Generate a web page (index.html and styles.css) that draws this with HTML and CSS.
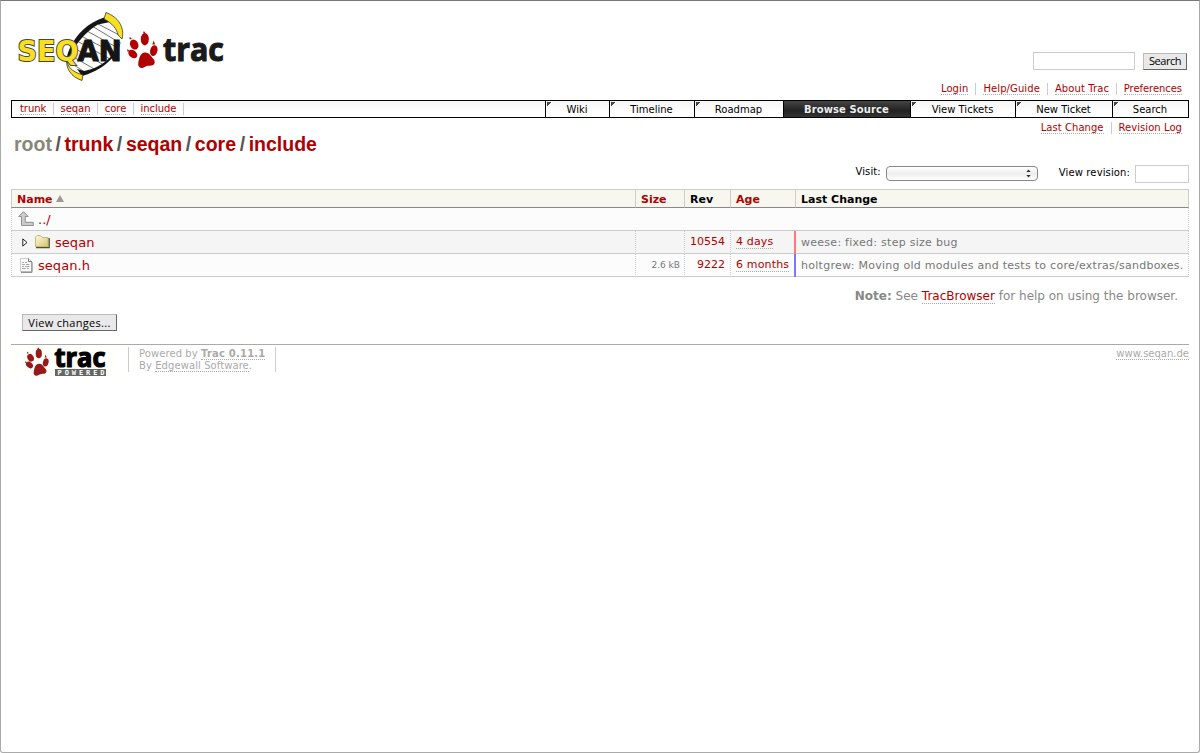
FILE: index.html
```html
<!DOCTYPE html>
<html lang="en">
<head>
<meta charset="utf-8">
<title>include – SeqAn Trac</title>
<link rel="stylesheet" href="styles.css">
</head>
<body>
<svg class="defs" width="0" height="0">
  <symbol id="paw" viewBox="0 0 31 37">
    <ellipse cx="17.800" cy="8.200" rx="4" ry="6.200"/>
    <ellipse cx="7.200" cy="13.600" rx="4" ry="5.200" transform="rotate(-28 7.200 13.600)"/>
    <ellipse cx="26.800" cy="19.600" rx="3.600" ry="5.500" transform="rotate(14 26.800 19.600)"/>
    <ellipse cx="5.800" cy="23" rx="3.600" ry="5" transform="rotate(-50 5.800 23)"/>
    <path d="M18 21.500c3.500-.2 5.500 2.800 7 4.800c1.600 2 3.300 3.200 2.500 5.900c-1 3-4 2.200-6.800 2.500c-2.700.4-4 2.700-6.700 2.200c-3.800-.9-2.900-4.800-2.200-7.700c.8-3.200 2-7.500 6.200-7.700z"/>
    <path d="M16 2.200l.9-2.200 1.500 2.200zM2.500 8.300l.2-2.600 2.300 2.200zM25.300 13.400l1.500-3.800 1.200 3.800zM.2 20.500l.3-2.500 2.200 2z"/>
  </symbol>
</svg>
<div class="window">
  <header class="header">
    <a class="logo" href="#">
      <svg width="214" height="76" viewBox="15 9 214 76">
        <path d="M104 18C91 23 80 32 73 44C68 53 66 61 70 69L83 76C101 69 116 57 121 39C123 31 119 23 110 17z" fill="#fff"/>
        <g stroke="#333" stroke-width=".7">
          <path d="M98 24L121 36M92 26L120 43M87 31L118 48M81 36L116 54M77 41L110 59M74 48L104 65M70 55L96 70M69 62L88 74"/>
        </g>
        <path d="M104 17.500C88 23 77 33 70 48C67 54 66 60 67 63C70 54 80 35 98 24.500L110 22z" fill="#151515"/>
        <path d="M121 41C115 56 101 68 84 71L77 69L82 76C101 71 117 58 121 41z" fill="#151515"/>
        <path d="M106 12.500C118 17 125 27 122 39L118 35C117 29 112 23 104 19z" fill="#f8df20" stroke="#333" stroke-width=".8"/>
        <path d="M67 58C66 66 72 72 83 75L82 80.500C71 77 65 68 67 58z" fill="#f8df20" stroke="#333" stroke-width=".8"/>
        <text class="logo-name" y="61"><tspan class="logo-seq" x="17.500" textLength="61" lengthAdjust="spacingAndGlyphs">SEQ</tspan><tspan class="logo-an" x="77.500" textLength="44" lengthAdjust="spacingAndGlyphs">AN</tspan></text>
        <use href="#paw" x="127" y="31" width="31" height="37" fill="#b00000"/>
        <text class="logo-trac" x="163" y="61" textLength="61" lengthAdjust="spacingAndGlyphs">trac</text>
      </svg>
    </a>
    <div class="header-side">
      <form class="search"><input type="text" class="field search-field"><button type="button" class="button search-button">Search</button></form>
      <ul class="links metanav">
        <li><a href="#">Login</a></li><li><a href="#">Help/Guide</a></li><li><a href="#">About Trac</a></li><li><a href="#">Preferences</a></li>
      </ul>
    </div>
  </header>
  <nav class="mainnav">
    <ul class="links path-links">
      <li><a href="#">trunk</a></li><li><a href="#">seqan</a></li><li><a href="#">core</a></li><li><a href="#">include</a></li>
    </ul>
    <ul class="tabs">
      <li class="t-wiki">Wiki</li><li class="t-timeline">Timeline</li><li class="t-roadmap">Roadmap</li><li class="t-browse active">Browse Source</li><li class="t-view">View Tickets</li><li class="t-new">New Ticket</li><li class="t-search">Search</li>
    </ul>
  </nav>
  <main class="main">
    <div class="context">
      <h1><a class="root" href="#">root</a><i>/</i><a href="#">trunk</a><i>/</i><a href="#">seqan</a><i>/</i><a href="#">core</a><i>/</i><a href="#">include</a></h1>
      <ul class="links ctxnav"><li><a href="#">Last Change</a></li><li><a href="#">Revision Log</a></li></ul>
    </div>
    <form class="jump">
      <span class="visit-label">Visit:</span>
      <span class="select"><svg width="5" height="9" viewBox="0 0 5 9"><path d="M.3 3L2.500 .5L4.700 3zM.3 6L2.500 8.500L4.700 6z" fill="#333"/></svg></span>
      <span class="rev-label">View revision:</span>
      <input type="text" class="field rev-field">
    </form>
    <table class="listing">
      <colgroup><col class="c-name"><col class="c-size"><col class="c-rev"><col class="c-age"><col class="c-change"></colgroup>
      <thead>
        <tr><th><a href="#">Name</a><svg class="sort" width="8" height="7"><path d="M0 7L4 0L8 7z" fill="#999"/></svg></th><th><a href="#">Size</a></th><th>Rev</th><th><a href="#">Age</a></th><th>Last Change</th></tr>
      </thead>
      <tbody>
        <tr>
          <td colspan="5"><div class="name"><svg class="up" width="17" height="16" viewBox="0 0 17 16"><path d="M5.500 .7L.7 5.500H3.500V14.500H15.300V11.300H7.300V5.500H10.200z" fill="#ccc" stroke="#888" stroke-width=".9"/></svg><a href="#">../</a></div></td>
        </tr>
        <tr class="even">
          <td><div class="name dir"><svg width="6" height="9" viewBox="0 0 6 9"><path d="M.8 .9V8.100L5 4.500z" fill="#fff" stroke="#222"/></svg>
            <svg class="folder" width="16" height="14" viewBox="0 0 16 14"><defs><linearGradient id="fold" x2="1" y2="1"><stop stop-color="#fffbe0"/><stop offset="1" stop-color="#d3c56c"/></linearGradient></defs><path d="M.5 11.500V2L2 .5H5.500L7 2.500H13V11.500z" fill="url(#fold)" stroke="#c4b97e"/><path d="M1 12.700H14.200V3" fill="none" stroke="#554d25" stroke-width="1.300"/></svg>
            <a href="#">seqan</a></div></td>
          <td class="size"></td><td class="rev"><a href="#">10554</a></td><td class="age"><a href="#">4 days</a></td><td class="change newer">weese: fixed: step size bug</td>
        </tr>
        <tr>
          <td><div class="name"><svg class="file" width="13" height="15" viewBox="0 0 13 15"><path d="M.5 .5H8.500L11.500 3.500V13.500H.5z" fill="#fafafa" stroke="#ccc"/><path d="M8.500 .5V3.500H12M12 4V14.300H1" fill="none" stroke="#777"/><path d="M2 4.500H4M5 4.500H7M2 6.500H5M6 6.500H9.500M2 8.500H4M5 8.500H9.500M2 10.500H6M7 10.500H9" stroke="#aaa"/></svg><a href="#">seqan.h</a></div></td>
          <td class="size">2.6 kB</td><td class="rev"><a href="#">9222</a></td><td class="age"><a href="#">6 months</a></td><td class="change older">holtgrew: Moving old modules and tests to core/extras/sandboxes.</td>
        </tr>
      </tbody>
    </table>
    <p class="help"><strong>Note:</strong> See <a href="#">TracBrowser</a> for help on using the browser.</p>
    <button type="button" class="button changes">View changes...</button>
  </main>
  <footer class="footer">
    <svg class="powered-logo" width="106" height="30" viewBox="11 346 106 30">
      <path d="M11 346H117V376H11z" fill="#fffffb"/>
      <use href="#paw" x="25" y="347" width="24" height="29" fill="#991818"/>
      <text class="small-trac" x="54.500" y="367" textLength="51" lengthAdjust="spacingAndGlyphs">trac</text>
      <path d="M55 369H106V376H55z" fill="#666"/>
      <text class="powered" x="57.500" y="375" textLength="47">POWERED</text>
    </svg>
    <p class="credit">Powered by <a href="#"><strong>Trac 0.11.1</strong></a><br>By <a href="#">Edgewall Software</a>.</p>
    <a class="site" href="#">www.seqan.de</a>
  </footer>
</div>
</body>
</html>
```

FILE: styles.css
```css
* { box-sizing: border-box; }
body { margin: 0; background: #fff; color: #000; font: 10px/12px "DejaVu Sans", Verdana, sans-serif; }
a { color: #b00000; text-decoration: none; }
ul { list-style: none; margin: 0; padding: 0; }
input, button { font-family: inherit; margin: 0; }
.defs { display: block; }
.window { height: 753px; border: 1px solid #aaa; border-top-color: #777; border-radius: 0 0 3px 3px; padding: 0 10px; overflow: hidden; }

.header { height: 99px; display: flex; justify-content: space-between; }
.logo { padding: 8px 0 0 4px; }
.logo svg { display: block; }
.logo-name { font: bold 29px "DejaVu Sans", sans-serif; paint-order: stroke; }
.logo-seq { fill: #f8df20; stroke: #444; stroke-width: 2px; }
.logo-an { fill: #151515; stroke: #151515; stroke-width: 1.2px; }
.logo-trac { font: bold 33px "Open Sans", sans-serif; fill: #1a1a1a; stroke: #1a1a1a; stroke-width: 1.1px; }
.header-side { display: flex; flex-direction: column; align-items: flex-end; padding-top: 51px; }
.search { display: flex; gap: 8px; padding-right: 2px; margin-bottom: 13px; }
.field { border: 1px solid #ccc; background: #fff; height: 18px; padding: 0; }
.search-field { width: 102px; }
.button { background: #e9e9e9; border: 1px solid #bbb; border-right-color: #666; border-bottom-color: #666; padding: 0; white-space: nowrap; font: 11px/15px "Open Sans", sans-serif; letter-spacing: .3px; }
.search-button { width: 44px; height: 17px; margin-top: 1px; padding-bottom: 2px; line-height: 13px; letter-spacing: -.45px; }

.links { display: flex; }
.links li { padding: 0 7px; border-right: 1px solid #ccc; white-space: nowrap; height: 12px; }
.links li:last-child { border-right: 0; }
.links a { display: block; height: 12px; border-bottom: 1px dotted #aaa; }
.metanav li:nth-child(-n+3) { letter-spacing: .1px; }
.metanav li:last-child { padding-left: 6.700px; letter-spacing: -.05px; }

.mainnav { display: flex; justify-content: space-between; height: 18px; border: 1px solid #000; background: linear-gradient(#f5f5f5, #fff 75%); }
.path-links { padding: 2px 0 0 1px; }
.path-links li { padding-right: 6.300px; letter-spacing: -.05px; }
.path-links li:last-child { border-right: 1px solid #ccc; }
.tabs { display: flex; line-height: 17px; text-align: center; }
.tabs li { padding-right: 1px; border-left: 1px solid #000; white-space: nowrap; background: linear-gradient(135deg, #444 3px, transparent 3.5px) 1px 1px / 5px 5px no-repeat; }
.tabs .active { background: linear-gradient(#444, #222 60%, #333); color: #eee; font-weight: bold; letter-spacing: .1px; }
.t-wiki { width: 64px; } .t-timeline { width: 85px; } .t-roadmap { width: 89px; } .t-browse { width: 127px; }
.t-view { width: 105px; } .t-new { width: 97px; } .t-search { width: 76px; }

.context { display: flex; justify-content: space-between; height: 47px; }
.ctxnav { padding-top: 4px; letter-spacing: .05px; }
h1 { margin: 0; padding: 15px 0 0 3px; font: bold 19.500px/22px "Liberation Sans", Arial, sans-serif; white-space: nowrap; }
h1 .root { color: #887; }
h1 i { font-style: normal; color: #555; font-weight: bold; padding: 0 3.600px; }
.jump { display: flex; justify-content: flex-end; height: 24px; letter-spacing: .12px; }
.jump span { white-space: nowrap; }
.visit-label { margin: 1px 5px 0 0; }
.select { display: flex; align-items: center; justify-content: flex-end; width: 152px; height: 15px; margin: 1px 21px 0 0; padding-right: 6px; border: 1px solid #888; border-radius: 4px; background: linear-gradient(#fff, #eee 50%, #fff); }
.rev-label { margin: 2px 5px 0 0; }
.rev-field { width: 54px; }

.listing { width: 1178px; table-layout: fixed; border-collapse: separate; border-spacing: 0; border-top: 1px solid #ccc; }
.c-name { width: 624px; } .c-size { width: 49px; } .c-rev { width: 46px; } .c-age { width: 65px; } .c-change { width: 394px; }
.listing th { height: 18px; padding: 2px 5px 0; background: #f7f7f0; border-left: 1px solid #ccc; border-bottom: 1px solid #888; text-align: left; font: bold 11px/15px "DejaVu Sans", sans-serif; white-space: nowrap; }
.listing th:last-child { border-right: 1px solid #ccc; }
.sort { margin: 0 0 1px 3px; }
.listing td { height: 23px; padding: 0; border-bottom: 1px solid #ccc; border-left: 1px dotted #ccc; background: #fcfcfc; white-space: nowrap; }
.listing td:last-child { border-right: 1px dotted #ccc; }
.listing .even td { background: #f5f5f5; }
.name { display: flex; align-items: center; height: 22px; padding-left: 7px; font-size: 13px; line-height: 22px; }
.name a { padding-top: 1px; letter-spacing: .05px; }
.name .up { margin: 0 3px 0 -1px; }
.name .file { margin: 0 5px 0 1px; }
.dir { padding-left: 10px; }
.dir .folder { margin: 0 4px 0 7px; }
.listing .size { text-align: right; padding-right: 4px; font-size: 9px; color: #777; }
.listing .rev { text-align: right; padding-right: 5px; font-size: 11px; }
.listing .age { padding-left: 5px; font-size: 11px; letter-spacing: .15px; }
.age a { border-bottom: 1px dotted #aaa; }
.listing .change { padding: 2px 0 0 5px; font-size: 11px; letter-spacing: .27px; color: #777; position: relative; }
.change::before { content: ""; position: absolute; left: -2px; top: 0; width: 2px; height: 23px; background: #f77; }
.older::before { background: #77f; }

.help { margin: 12px 11px 0 0; text-align: right; font-size: 12px; line-height: 14px; color: #888; }
.help a { border-bottom: 1px dotted #aaa; }
.changes { display: block; width: 95px; height: 17px; margin: 11px 0 0 11px; }
.footer { display: flex; margin-top: 13px; border-top: 1px solid #aaa; color: #aaa; line-height: 12px; padding-top: 1px; }
.footer a { color: #aaa; border-bottom: 1px dotted #aaa; }
.powered-logo { overflow: visible; }
.credit { width: 148px; height: 25px; margin: 1px 0 0 11px; padding: 1px 0 0 10px; border: solid #ccc; border-width: 0 1px; white-space: nowrap; letter-spacing: .08px; }
.credit strong { letter-spacing: .2px; }
.footer .site { height: 13px; padding-top: 1px; margin: 1px 0 0 auto; white-space: nowrap; }
.small-trac { font: bold 26px "Open Sans", sans-serif; fill: #000; stroke: #000; stroke-width: 1.2px; }
.powered { font: bold 7px "DejaVu Sans Mono", monospace; fill: #fff; }
```
